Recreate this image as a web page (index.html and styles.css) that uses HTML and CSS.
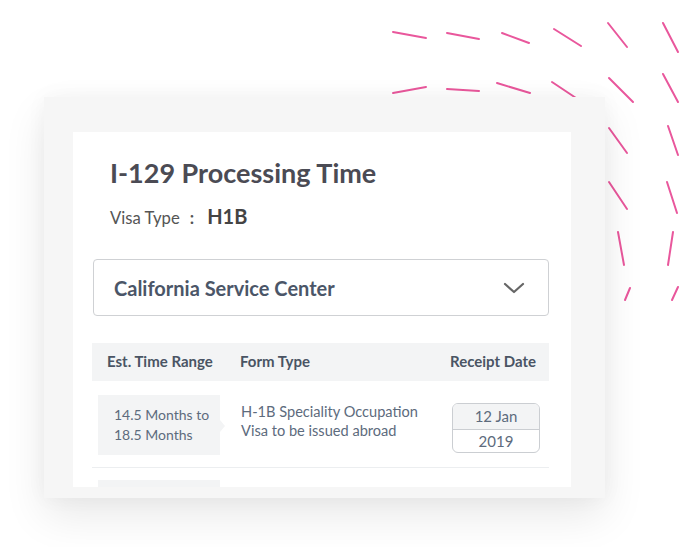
FILE: index.html
```html
<!DOCTYPE html>
<html>
<head>
<meta charset="utf-8">
<link rel="stylesheet" href="styles.css">
</head>
<body>
<div class="stage">
  <svg class="dashes" width="683" height="547" viewBox="0 0 683 547" xmlns="http://www.w3.org/2000/svg">
    <g stroke="#e9579c" stroke-width="2" stroke-linecap="round" fill="none">
      <line x1="393" y1="32" x2="426" y2="38"/>
      <line x1="447" y1="33" x2="479" y2="39"/>
      <line x1="502" y1="33" x2="529" y2="43"/>
      <line x1="554" y1="29" x2="581" y2="46"/>
      <line x1="608" y1="23" x2="627" y2="47"/>
      <line x1="663" y1="23" x2="678" y2="52"/>
      <line x1="393" y1="93" x2="426" y2="87"/>
      <line x1="447" y1="89" x2="479" y2="91"/>
      <line x1="497" y1="83" x2="530" y2="93"/>
      <line x1="552" y1="82" x2="576" y2="98"/>
      <line x1="609" y1="78" x2="633" y2="102"/>
      <line x1="609" y1="128" x2="627" y2="153"/>
      <line x1="609" y1="182" x2="627" y2="209"/>
      <line x1="618" y1="232" x2="624" y2="265"/>
      <line x1="630" y1="288" x2="625" y2="300"/>
      <line x1="663" y1="74" x2="678" y2="102"/>
      <line x1="668" y1="126" x2="678" y2="155"/>
      <line x1="667" y1="182" x2="677" y2="213"/>
      <line x1="673" y1="232" x2="668" y2="265"/>
      <line x1="678" y1="287" x2="672" y2="300"/>
    </g>
  </svg>
  <div class="frame">
    <div class="card">
      <h1 class="title">I-129 Processing Time</h1>
      <div class="visa"><span class="visa-label">Visa Type</span><span class="visa-colon">:</span><span class="visa-value">H1B</span></div>
      <div class="select">
        <span class="select-text">California Service Center</span>
        <svg class="chevron" width="22" height="12" viewBox="0 0 22 12"><polyline points="2,2 11,10 20,2" fill="none" stroke="#666" stroke-width="2.2" stroke-linecap="round" stroke-linejoin="round"/></svg>
      </div>
      <div class="thead">
        <span class="th">Est. Time Range</span>
        <span class="th">Form Type</span>
        <span class="th">Receipt Date</span>
      </div>
      <div class="row">
        <div class="range">14.5 Months to<br>18.5 Months</div>
        <div class="form">H-1B Speciality Occupation<br>Visa to be issued abroad</div>
        <div class="date"><div class="date-top">12 Jan</div><div class="date-bottom">2019</div></div>
      </div>
      <div class="row row-next">
        <div class="range range-empty"></div>
      </div>
    </div>
  </div>
</div>
</body>
</html>
```
FILE: styles.css
```css
html, body {
  margin: 0;
  padding: 0;
  background: #ffffff;
}
body {
  width: 683px;
  height: 547px;
  overflow: hidden;
  font-family: "Lato", "Noto Sans", sans-serif;
}
.stage {
  position: relative;
  width: 683px;
  height: 547px;
  padding-top: 97px;
  padding-left: 44px;
  box-sizing: border-box;
}
.dashes {
  position: absolute;
  left: 0;
  top: 0;
}
.frame {
  position: relative;
  width: 561px;
  height: 401px;
  box-sizing: border-box;
  padding: 35px 34px 11px 29px;
  background: #f6f6f6;
  box-shadow: 0 18px 40px rgba(0, 0, 0, 0.09), 0 0 20px rgba(0, 0, 0, 0.04);
}
.card {
  background: #ffffff;
  height: 355px;
  overflow: hidden;
  padding: 0 22px 0 19px;
  box-sizing: border-box;
}
.title {
  margin: 0;
  padding: 25px 0 0 18px;
  font-size: 27px;
  line-height: 32px;
  font-weight: 700;
  color: #4b4b54;
}
.visa {
  display: flex;
  align-items: baseline;
  height: 24px;
  padding: 15px 0 0 18px;
  color: #555;
}
.visa-label {
  font-size: 16.7px;
}
.visa-colon {
  font-size: 17px;
  font-weight: 700;
  margin: 0 13px 0 10px;
}
.visa-value {
  font-size: 20px;
  font-weight: 700;
  color: #444;
}
.select {
  margin-top: 31px;
  margin-left: 1px;
  height: 57px;
  box-sizing: border-box;
  border: 1px solid #cfd1d4;
  border-radius: 4px;
  display: flex;
  align-items: center;
  justify-content: space-between;
  padding: 0 23px 0 20px;
}
.select-text {
  font-size: 20px;
  font-weight: 700;
  color: #4b5668;
}
.chevron {
  display: block;
}
.thead {
  margin-top: 27px;
  height: 38px;
  box-sizing: border-box;
  background: #f3f4f5;
  display: grid;
  grid-template-columns: 133px 1fr auto;
  align-items: center;
  padding: 0 13px 3px 15px;
}
.th {
  font-size: 15px;
  font-weight: 700;
  color: #4a5464;
}
.row {
  display: grid;
  grid-template-columns: 143px 1fr 88px;
  align-items: center;
  padding: 14px 9px 12px 6px;
  border-bottom: 1px solid #eceef0;
}
.row-next {
  border-bottom: none;
  padding-top: 12px;
}
.range {
  position: relative;
  width: 122px;
  height: 60px;
  box-sizing: border-box;
  background: #f3f4f5;
  padding: 10px 0 0 16px;
  font-size: 14px;
  line-height: 20px;
  color: #5d6b7d;
}
.range::after {
  content: "";
  position: absolute;
  left: 122px;
  top: 25px;
  border-top: 6px solid transparent;
  border-bottom: 6px solid transparent;
  border-left: 5px solid #f3f4f5;
}
.range-empty::after {
  display: none;
}
.form {
  font-size: 14.6px;
  line-height: 19px;
  color: #5d6b7d;
  margin-top: -8px;
}
.date {
  border: 1px solid #cbced2;
  border-radius: 6px;
  overflow: hidden;
  height: 50px;
  box-sizing: border-box;
  text-align: center;
  font-size: 15px;
  color: #5d6b7d;
  margin-top: 6px;
}
.date-top {
  height: 25px;
  line-height: 25px;
  background: #f3f4f5;
  border-bottom: 1px solid #cbced2;
}
.date-bottom {
  line-height: 23px;
}
```
